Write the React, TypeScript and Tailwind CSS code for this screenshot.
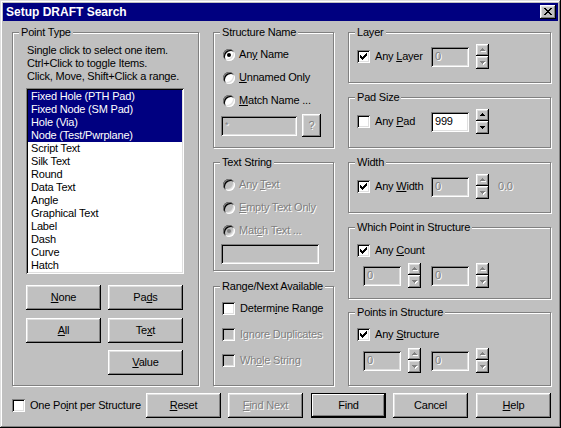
import React from "react";

// classic 3D bevels
const raised =
  "shadow-[inset_-1px_-1px_0_#000,inset_1px_1px_0_#fff,inset_-2px_-2px_0_#808080,inset_2px_2px_0_#dfdfdf]";
const raisedDefault =
  "shadow-[inset_0_0_0_1px_#000,inset_-2px_-2px_0_#000,inset_2px_2px_0_#fff,inset_-3px_-3px_0_#808080]";
const sunken =
  "shadow-[inset_1px_1px_0_#808080,inset_-1px_-1px_0_#fff,inset_2px_2px_0_#000,inset_-2px_-2px_0_#dfdfdf]";
const grayText = "text-[#808080] [text-shadow:1px_1px_0_#fff]";

const CHECK_D =
  "M6 0h1v1h-1z M5 1h2v1h-2z M0 2h1v1h-1z M4 2h3v1h-3z M0 3h2v1h-2z M3 3h3v1h-3z M0 4h5v1h-5z M1 5h3v1h-3z M2 6h1v1h-1z";
const CLOSE_D =
  "M0 0h2v1h-2z M6 0h2v1h-2z M1 1h2v1h-2z M5 1h2v1h-2z M2 2h4v1h-4z M3 3h2v1h-2z M2 4h4v1h-4z M1 5h2v1h-2z M5 5h2v1h-2z M0 6h2v1h-2z M6 6h2v1h-2z";

function U({ children }: { children: React.ReactNode }) {
  return <span className="underline underline-offset-[1px]">{children}</span>;
}

function Group({
  title,
  className,
  children,
}: {
  title: string;
  className: string;
  children?: React.ReactNode;
}) {
  return (
    <div
      className={`relative shrink-0 border border-[#808080] shadow-[inset_1px_1px_0_#fff,1px_1px_0_#fff] ${className}`}
    >
      <div className="absolute -top-[7px] left-[6px] bg-[#c0c0c0] px-[2px] leading-[13px] whitespace-nowrap">
        {title}
      </div>
      {children}
    </div>
  );
}

function Check({ checked, disabled }: { checked?: boolean; disabled?: boolean }) {
  return (
    <div
      className={`relative shrink-0 w-[13px] h-[13px] ${disabled ? "bg-[#c0c0c0]" : "bg-white"} ${sunken}`}
    >
      {checked && (
        <svg
          className="absolute left-[3px] top-[3px]"
          width="7"
          height="7"
          viewBox="0 0 7 7"
          shapeRendering="crispEdges"
        >
          <path d={CHECK_D} fill={disabled ? "#808080" : "#000"} />
        </svg>
      )}
    </div>
  );
}

function Radio({ checked, disabled }: { checked?: boolean; disabled?: boolean }) {
  return (
    <div
      className={`relative shrink-0 w-[12px] h-[12px] rounded-full ${disabled ? "bg-[#c0c0c0]" : "bg-white"} ${sunken}`}
    >
      {checked && (
        <div
          className={`absolute left-[4px] top-[4px] w-[4px] h-[4px] rounded-full ${disabled ? "bg-[#808080]" : "bg-black"}`}
        />
      )}
    </div>
  );
}

function RadioRow({
  checked,
  disabled,
  children,
}: {
  checked?: boolean;
  disabled?: boolean;
  children: React.ReactNode;
}) {
  return (
    <div className="flex items-center gap-[4px] h-[13px]">
      <Radio checked={checked} disabled={disabled} />
      <span className={`whitespace-nowrap ${disabled ? grayText : ""}`}>{children}</span>
    </div>
  );
}

function CheckRow({
  checked,
  disabled,
  children,
}: {
  checked?: boolean;
  disabled?: boolean;
  children: React.ReactNode;
}) {
  return (
    <div className="flex items-center gap-[5px] h-[13px]">
      <Check checked={checked} disabled={disabled} />
      <span className={`whitespace-nowrap ${disabled ? grayText : ""}`}>{children}</span>
    </div>
  );
}

function Arrow({ up, disabled }: { up?: boolean; disabled?: boolean }) {
  const d = up
    ? "M2 0h1v1h-1z M1 1h3v1h-3z M0 2h5v1h-5z"
    : "M0 0h5v1h-5z M1 1h3v1h-3z M2 2h1v1h-1z";
  return (
    <svg width="6" height="4" viewBox="0 0 6 4" shapeRendering="crispEdges">
      {disabled && <path d={d} fill="#fff" transform="translate(1 1)" />}
      <path d={d} fill={disabled ? "#808080" : "#000"} />
    </svg>
  );
}

function Spin({ disabled }: { disabled?: boolean }) {
  return (
    <div className="flex flex-col w-[13px] shrink-0">
      <div className={`h-[12px] flex items-center justify-center pl-[1px] bg-[#c0c0c0] ${raised}`}>
        <Arrow up disabled={disabled} />
      </div>
      <div className={`h-[13px] flex items-center justify-center pl-[1px] bg-[#c0c0c0] ${raised}`}>
        <Arrow disabled={disabled} />
      </div>
    </div>
  );
}

function Field({
  value,
  disabled,
  className,
}: {
  value?: string;
  disabled?: boolean;
  className: string;
}) {
  return (
    <div
      className={`shrink-0 h-[20px] pl-[4px] flex items-center ${disabled ? `bg-[#c0c0c0] ${grayText}` : "bg-white"} ${sunken} ${className}`}
    >
      {value}
    </div>
  );
}

function Btn({
  children,
  className,
  disabled,
  def,
}: {
  children: React.ReactNode;
  className: string;
  disabled?: boolean;
  def?: boolean;
}) {
  return (
    <div
      className={`shrink-0 flex items-center justify-center bg-[#c0c0c0] ${def ? raisedDefault : raised} ${disabled ? grayText : ""} ${className}`}
    >
      <span className="whitespace-nowrap">{children}</span>
    </div>
  );
}

const pointTypes = [
  { name: "Fixed Hole (PTH Pad)", sel: true },
  { name: "Fixed Node (SM Pad)", sel: true },
  { name: "Hole (Via)", sel: true },
  { name: "Node (Test/Pwrplane)", sel: true },
  { name: "Script Text" },
  { name: "Silk Text" },
  { name: "Round" },
  { name: "Data Text" },
  { name: "Angle" },
  { name: "Graphical Text" },
  { name: "Label" },
  { name: "Dash" },
  { name: "Curve" },
  { name: "Hatch" },
];

function SpinPair() {
  return (
    <div className="flex items-center pl-[14px]">
      <Field disabled value="0" className="w-[38px]" />
      <div className="ml-[7px]">
        <Spin disabled />
      </div>
      <Field disabled value="0" className="ml-[10px] w-[38px]" />
      <div className="ml-[7px]">
        <Spin disabled />
      </div>
    </div>
  );
}

export default function App() {
  return (
    <div className="w-[561px] h-[428px] bg-[#c0c0c0] p-[3px] text-black font-['Liberation_Sans',Arial,sans-serif] text-[11px] leading-[13px] tracking-[-0.2px] shadow-[inset_-1px_-1px_0_#000,inset_1px_1px_0_#dfdfdf,inset_-2px_-2px_0_#808080,inset_2px_2px_0_#fff] select-none">
      {/* Title bar */}
      <div className="h-[18px] bg-[#000080] flex items-center justify-between pl-[3px] pr-[2px]">
        <span className="text-white font-bold text-[12px] leading-[18px] tracking-normal">
          Setup DRAFT Search
        </span>
        <div className={`relative w-[16px] h-[14px] bg-[#c0c0c0] ${raised}`}>
          <svg
            className="absolute left-[4px] top-[3px]"
            width="8"
            height="7"
            viewBox="0 0 8 7"
            shapeRendering="crispEdges"
          >
            <path d={CLOSE_D} fill="#000" />
          </svg>
        </div>
      </div>

      {/* Groups */}
      <div className="flex items-start pl-[9px] pt-[11px]">
        {/* Point Type */}
        <Group title="Point Type" className="w-[187px] h-[354px]">
          <div className="pl-[13px] pt-[11px]">
            <div className="pl-[1px] whitespace-nowrap">
              <div>Single click to select one item.</div>
              <div>Ctrl+Click to toggle Items.</div>
              <div>Click, Move, Shift+Click a range.</div>
            </div>
            <div className={`mt-[5px] w-[158px] h-[186px] bg-white p-[2px] ${sunken}`}>
              {pointTypes.map((p) => (
                <div
                  key={p.name}
                  className={`h-[13px] pl-[3px] whitespace-nowrap ${p.sel ? "bg-[#000080] text-white" : ""}`}
                >
                  {p.name}
                </div>
              ))}
            </div>
            <div className="mt-[11px] flex gap-[7px]">
              <Btn className="w-[75px] h-[25px]">
                <U>N</U>one
              </Btn>
              <Btn className="w-[75px] h-[25px]">
                Pa<U>d</U>s
              </Btn>
            </div>
            <div className="mt-[8px] flex gap-[7px]">
              <Btn className="w-[75px] h-[25px]">
                <U>A</U>ll
              </Btn>
              <Btn className="w-[75px] h-[25px]">
                Te<U>x</U>t
              </Btn>
            </div>
            <div className="mt-[7px] flex">
              <Btn className="ml-[82px] w-[75px] h-[25px]">
                <U>V</U>alue
              </Btn>
            </div>
          </div>
        </Group>

        {/* Middle column */}
        <div className="ml-[14px] flex flex-col">
          <Group title="Structure Name" className="w-[121px] h-[116px]">
            <div className="pt-[15px] pl-[9px] flex flex-col gap-[10px]">
              <RadioRow checked>
                An<U>y</U> Name
              </RadioRow>
              <RadioRow>
                <U>U</U>nnamed Only
              </RadioRow>
              <RadioRow>
                <U>M</U>atch Name ...
              </RadioRow>
            </div>
            <div className="mt-[7px] ml-[7px] flex items-center gap-[5px]">
              <Field disabled value="*" className="w-[76px] !items-start pt-[3px] text-[9px]" />
              <Btn disabled className="w-[19px] h-[23px]">
                ?
              </Btn>
            </div>
          </Group>

          <Group title="Text String" className="mt-[14px] w-[121px] h-[109px]">
            <div className="pt-[15px] pl-[9px] flex flex-col gap-[10px]">
              <RadioRow disabled>
                Any <U>T</U>ext
              </RadioRow>
              <RadioRow disabled>
                <U>E</U>mpty Text Only
              </RadioRow>
              <RadioRow disabled checked>
                Mat<U>c</U>h Text ...
              </RadioRow>
            </div>
            <div className="mt-[7px] ml-[7px] flex">
              <Field disabled className="w-[98px]" />
            </div>
          </Group>

          <Group title="Range/Next Available" className="mt-[15px] w-[121px] h-[100px]">
            <div className="pt-[15px] pl-[8px] flex flex-col gap-[13px]">
              <CheckRow>
                Determ<U>i</U>ne Range
              </CheckRow>
              <CheckRow disabled>
                I<U>g</U>nore Duplicates
              </CheckRow>
              <CheckRow disabled>
                Wh<U>o</U>le String
              </CheckRow>
            </div>
          </Group>
        </div>

        {/* Right column */}
        <div className="ml-[14px] flex flex-col">
          <Group title="Layer" className="w-[203px] h-[51px]">
            <div className="pt-[11px] pl-[8px] flex items-center">
              <div className="w-[74px]">
                <CheckRow checked>
                  Any <U>L</U>ayer
                </CheckRow>
              </div>
              <Field disabled value="0" className="w-[38px]" />
              <div className="ml-[7px]">
                <Spin disabled />
              </div>
            </div>
          </Group>

          <Group title="Pad Size" className="mt-[14px] w-[203px] h-[51px]">
            <div className="pt-[11px] pl-[8px] flex items-center">
              <div className="w-[74px]">
                <CheckRow>
                  Any <U>P</U>ad
                </CheckRow>
              </div>
              <Field value="999" className="w-[38px]" />
              <div className="ml-[7px]">
                <Spin />
              </div>
            </div>
          </Group>

          <Group title="Width" className="mt-[14px] w-[203px] h-[51px]">
            <div className="pt-[11px] pl-[8px] flex items-center">
              <div className="w-[74px]">
                <CheckRow checked>
                  Any <U>W</U>idth
                </CheckRow>
              </div>
              <Field disabled value="0" className="w-[38px]" />
              <div className="ml-[7px]">
                <Spin disabled />
              </div>
              <span className={`ml-[9px] ${grayText}`}>0.0</span>
            </div>
          </Group>

          <Group title="Which Point in Structure" className="mt-[14px] w-[203px] h-[72px]">
            <div className="pt-[16px] pl-[8px]">
              <CheckRow checked>
                Any <U>C</U>ount
              </CheckRow>
            </div>
            <div className="mt-[6px]">
              <SpinPair />
            </div>
          </Group>

          <Group title="Points in Structure" className="mt-[13px] w-[203px] h-[74px]">
            <div className="pt-[15px] pl-[8px]">
              <CheckRow checked>
                Any <U>S</U>tructure
              </CheckRow>
            </div>
            <div className="mt-[7px]">
              <SpinPair />
            </div>
          </Group>
        </div>
      </div>

      {/* Bottom row */}
      <div className="mt-[7px] pl-[9px] flex items-center">
        <div className="w-[134px] flex items-center gap-[5px]">
          <Check />
          <span className="whitespace-nowrap">
            One Po<U>i</U>nt per Structure
          </span>
        </div>
        <Btn className="w-[75px] h-[25px]">
          <U>R</U>eset
        </Btn>
        <Btn disabled className="ml-[7px] w-[75px] h-[25px]">
          <U>F</U>ind Next
        </Btn>
        <Btn def className="ml-[8px] w-[75px] h-[25px]">
          Find
        </Btn>
        <Btn className="ml-[7px] w-[75px] h-[25px]">Cancel</Btn>
        <Btn className="ml-[8px] w-[75px] h-[25px]">
          <U>H</U>elp
        </Btn>
      </div>
    </div>
  );
}
